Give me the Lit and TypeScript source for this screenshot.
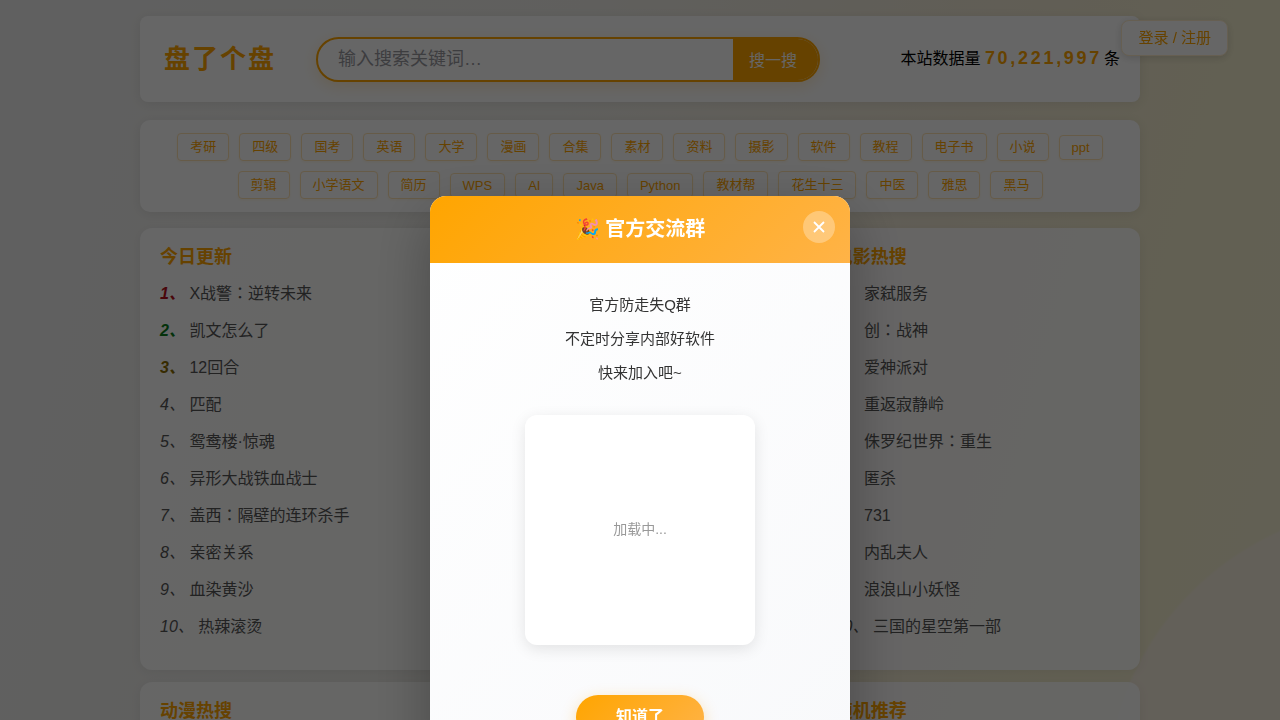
import { LitElement, html, css } from "lit";
import { customElement, property, state } from "lit/decorators.js";
import { classMap } from "lit/directives/class-map.js";

const sans = css`"Liberation Sans", "Noto Sans CJK SC", sans-serif`;

const TAGS = [
  "考研", "四级", "国考", "英语", "大学", "漫画", "合集", "素材", "资料", "摄影", "软件", "教程", "电子书", "小说", "ppt",
  "剪辑", "小学语文", "简历", "WPS", "AI", "Java", "Python", "教材帮", "花生十三", "中医", "雅思", "黑马",
];

const BOARDS: { title: string; items: string[] }[] = [
  {
    title: "今日更新",
    items: ["X战警：逆转未来", "凯文怎么了", "12回合", "匹配", "鸳鸯楼·惊魂", "异形大战铁血战士", "盖西：隔壁的连环杀手", "亲密关系", "血染黄沙", "热辣滚烫"],
  },
  { title: "电视剧热搜", items: [] },
  {
    title: "电影热搜",
    items: ["家弑服务", "创：战神", "爱神派对", "重返寂静岭", "侏罗纪世界：重生", "匿杀", "731", "内乱夫人", "浪浪山小妖怪", "三国的星空第一部"],
  },
  { title: "动漫热搜", items: [] },
  { title: "综艺热搜", items: [] },
  { title: "随机推荐", items: [] },
];

@customElement("rank-board")
class RankBoard extends LitElement {
  @property() heading = "";
  @property({ attribute: false }) items: string[] = [];

  static styles = css`
    :host {
      display: block;
      box-sizing: border-box;
      padding: 16px 20px 25px;
      border-radius: 12px;
      background: rgba(255, 255, 255, 0.9);
      box-shadow: 0 2px 12px rgba(0, 0, 0, 0.06);
    }
    .title {
      margin: 0 0 5px;
      font-size: 18px;
      line-height: 26px;
      color: #ffa500;
    }
    .list {
      margin: 0;
      padding: 0;
      list-style: none;
      font-family: "Liberation Sans", "Noto Sans CJK JP", sans-serif;
      font-size: 16px;
      line-height: 37px;
    }
    .link {
      color: #555;
      text-decoration: none;
    }
    .top1, .top2, .top3 { font-weight: bold; }
    .top1 { color: #b8101c; }
    .top2 { color: #0a7d1c; }
    .top3 { color: #8a6d00; }
  `;

  render() {
    return html`
      <h2 class="title">${this.heading}</h2>
      <ol class="list">
        ${this.items.map(
          (name, i) => html`<li><a class="link" href="#"><em class="rank top${i + 1}">${i + 1}、</em> ${name}</a></li>`
        )}
      </ol>
    `;
  }
}

@customElement("group-dialog")
class GroupDialog extends LitElement {
  static styles = css`
    :host {
      position: fixed;
      inset: 0;
      z-index: 20;
      display: flex;
      justify-content: center;
      align-items: flex-start;
      overflow: hidden;
      box-sizing: border-box;
      padding: 196px 16px 0;
      background: rgba(0, 0, 0, 0.6);
    }
    .dialog {
      position: relative;
      flex: 1;
      overflow: hidden;
      border-radius: 16px;
      background: linear-gradient(135deg, #fff 0%, #f8f9fb 100%);
    }
    .wrap {
      display: flex;
      flex: 0 1 420px;
      border-radius: 16px;
      box-shadow: 0 20px 60px rgba(0, 0, 0, 0.3);
    }
    .head {
      padding: 20px;
      background: linear-gradient(135deg, #ffa500, #ffb347);
      color: #fff;
      text-align: center;
    }
    .title {
      margin: 0;
      font-size: 20px;
      line-height: 27px;
    }
    .close {
      position: absolute;
      top: 15px;
      right: 15px;
      display: flex;
      align-items: center;
      justify-content: center;
      width: 32px;
      height: 32px;
      padding: 0;
      border: 0;
      border-radius: 50%;
      background: rgba(255, 255, 255, 0.3);
      cursor: pointer;
    }
    .body {
      display: flex;
      flex-direction: column;
      align-items: center;
      padding: 25px 24px 30px;
    }
    .text {
      margin: 0;
      font-size: 15px;
      line-height: 34px;
      color: #333;
      text-align: center;
    }
    .code {
      display: flex;
      align-items: center;
      justify-content: center;
      box-sizing: border-box;
      width: 230px;
      height: 230px;
      margin: 25px 0 50px;
      padding-bottom: 4px;
      border-radius: 12px;
      background: #fff;
      box-shadow: 0 4px 15px rgba(0, 0, 0, 0.1);
      font-size: 14px;
      color: #999;
    }
    .ok {
      padding: 10px 40px;
      border: 0;
      border-radius: 25px;
      background: linear-gradient(135deg, #ffa500, #ffb347);
      box-shadow: 0 4px 15px rgba(255, 165, 0, 0.3);
      font: bold 16px/24px ${sans};
      color: #fff;
      cursor: pointer;
    }
  `;

  private dismiss() {
    this.dispatchEvent(new CustomEvent("dismiss"));
  }

  render() {
    return html`
      <div class="wrap">
        <section class="dialog" role="dialog" aria-modal="true" aria-labelledby="dialog-title">
          <header class="head">
            <h2 class="title" id="dialog-title">🎉 官方交流群</h2>
            <button class="close" aria-label="关闭" @click=${this.dismiss}>
              <svg width="12" height="12" viewBox="0 0 12 12" fill="none" stroke="#fff" stroke-width="1.8">
                <path d="M1 1 11 11M11 1 1 11" />
              </svg>
            </button>
          </header>
          <div class="body">
            <p class="text">官方防走失Q群</p>
            <p class="text">不定时分享内部好软件</p>
            <p class="text">快来加入吧~</p>
            <div class="code">加载中...</div>
            <button class="ok" @click=${this.dismiss}>知道了</button>
          </div>
        </section>
      </div>
    `;
  }
}

@customElement("app-root")
class AppRoot extends LitElement {
  @state() private dialogOpen = true;

  static styles = css`
    :host {
      display: block;
      height: 100vh;
      overflow: hidden;
      font-family: ${sans};
      background:
        radial-gradient(circle at right -120px bottom -80px, #f8efdf 0 293px, transparent 296px),
        linear-gradient(105deg, #f1f1f1 0%, #efeee9 40%, #f2ead6 68%, #f5efcf 84%, #f5efd2 100%);
    }
    .page {
      max-width: 1000px;
      margin: 0 auto;
      padding: 16px 0;
    }
    .header {
      display: flex;
      align-items: center;
      justify-content: space-between;
      box-sizing: border-box;
      min-height: 86px;
      padding: 0 20px 0 24px;
      border-radius: 8px;
      background: #fff;
      box-shadow: 0 2px 12px rgba(0, 0, 0, 0.08);
    }
    .brand {
      display: flex;
      flex: 0 1 656px;
      align-items: center;
      gap: 40px;
    }
    .logo {
      margin: 0;
      font-size: 26px;
      line-height: 38px;
      letter-spacing: 2px;
      white-space: nowrap;
      color: #ffa500;
    }
    .search {
      display: flex;
      flex: 1;
      box-sizing: border-box;
      height: 45px;
      overflow: hidden;
      border: 2px solid #ffa500;
      border-radius: 24px;
      background: #fff;
      box-shadow: 0 4px 15px rgba(255, 165, 0, 0.2);
    }
    .query {
      flex: 1;
      min-width: 0;
      padding: 0 20px;
      border: 0;
      outline: 0;
      background: none;
      font: 18px ${sans};
    }
    .query::placeholder {
      color: #99999f;
    }
    .go {
      padding: 0 21px 0 16px;
      border: 0;
      background: #ffa500;
      font: 16px ${sans};
      color: #fff;
      cursor: pointer;
    }
    .stats {
      margin: 0;
      padding-bottom: 4px;
      font-size: 16px;
      white-space: nowrap;
    }
    .count {
      margin-right: 2px;
      font-size: 18px;
      letter-spacing: 0.15em;
      color: #ffa500;
    }
    .login {
      position: fixed;
      top: 20px;
      right: 52px;
      z-index: 10;
      padding: 6px 16px;
      border: 1px solid #ffedcc;
      border-radius: 8px;
      background: #fff;
      box-shadow: 0 2px 8px rgba(0, 0, 0, 0.15);
      font: 15px/22px ${sans};
      color: #ffa500;
      cursor: pointer;
    }
    .tags {
      display: flex;
      flex-wrap: wrap;
      align-items: center;
      justify-content: center;
      gap: 10px;
      margin: 18px 0 16px;
      padding: 13px 20px;
      border-radius: 10px;
      background: #fff;
      box-shadow: 0 2px 12px rgba(0, 0, 0, 0.08);
    }
    .tag {
      padding: 4px 12px;
      border: 1px solid #ffe4b3;
      border-radius: 4px;
      font-size: 13px;
      line-height: 18px;
      color: #ffa500;
      text-decoration: none;
      box-shadow: 0 1px 3px rgba(255, 165, 0, 0.1);
    }
    .latin {
      line-height: 15px;
    }
    .boards {
      display: grid;
      grid-template-columns: repeat(3, minmax(0, 1fr));
      gap: 12px;
    }
  `;

  render() {
    return html`
      <main class="page">
        <header class="header">
          <div class="brand">
            <h1 class="logo">盘了个盘</h1>
            <form class="search" @submit=${(e: Event) => e.preventDefault()}>
              <input class="query" type="text" aria-label="搜索" placeholder="输入搜索关键词…" />
              <button class="go">搜一搜</button>
            </form>
          </div>
          <p class="stats">本站数据量 <strong class="count">70,221,997</strong>条</p>
        </header>
        <nav class="tags" aria-label="热门标签">
          ${TAGS.map((t) => html`<a class=${classMap({ tag: true, latin: /^[a-z]+$/i.test(t) })} href="#">${t}</a>`)}
        </nav>
        <div class="boards">
          ${BOARDS.map((b) => html`<rank-board .heading=${b.title} .items=${b.items}></rank-board>`)}
        </div>
      </main>
      <button class="login">登录 / 注册</button>
      ${this.dialogOpen ? html`<group-dialog @dismiss=${() => (this.dialogOpen = false)}></group-dialog>` : ""}
    `;
  }
}
